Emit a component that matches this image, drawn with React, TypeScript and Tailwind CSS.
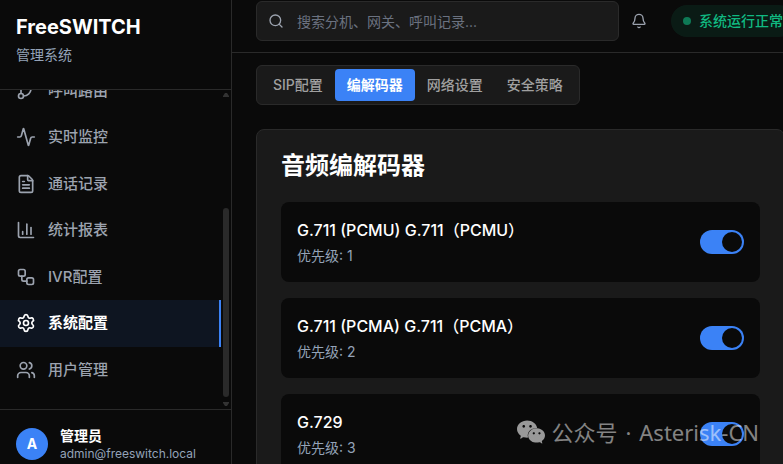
import { useState } from "react";
import {
  Activity,
  Bell,
  ChartColumn,
  FileText,
  GitBranch,
  Search,
  Settings,
  Users,
  Workflow,
} from "lucide-react";
import { SiWechat } from "react-icons/si";

const NAV_ITEMS = [
  { key: "routing", label: "呼叫路由", icon: GitBranch },
  { key: "monitor", label: "实时监控", icon: Activity },
  { key: "cdr", label: "通话记录", icon: FileText },
  { key: "reports", label: "统计报表", icon: ChartColumn },
  { key: "ivr", label: "IVR配置", icon: Workflow },
  { key: "settings", label: "系统配置", icon: Settings },
  { key: "users", label: "用户管理", icon: Users },
];

const TABS = ["SIP配置", "编解码器", "网络设置", "安全策略"];

const CODECS = [
  { id: "pcmu", name: "G.711 (PCMU) G.711（PCMU）", priority: 1 },
  { id: "pcma", name: "G.711 (PCMA) G.711（PCMA）", priority: 2 },
  { id: "g729", name: "G.729", priority: 3 },
];

function Sidebar() {
  return (
    <aside className="flex w-[232px] shrink-0 flex-col border-r border-[#2a2a2a]">
      <div className="shrink-0 border-b border-[#2a2a2a] px-4 pt-[13px] pb-6">
        <h1 className="text-xl font-bold">FreeSWITCH</h1>
        <p className="mt-1 text-sm text-[#94a3b8]">管理系统</p>
      </div>

      <div className="flex min-h-0 flex-1">
        <nav className="flex flex-1 flex-col justify-end overflow-hidden pb-4" aria-label="主导航">
          {NAV_ITEMS.map(({ key, label, icon: Icon }) => (
            <a
              key={key}
              href={`#${key}`}
              className={[
                "flex shrink-0 items-center gap-3 px-4 py-3 text-[15px] leading-normal",
                key === "settings"
                  ? "border-r-2 border-[#3b82f6] bg-[#3b82f6]/10 font-semibold text-white"
                  : "font-medium text-[#9ca3af]",
              ].join(" ")}
            >
              <Icon size={20} />
              {label}
            </a>
          ))}
        </nav>

        {/* Scrollbar */}
        <div className="flex w-[10px] shrink-0 flex-col items-center py-[3px]" aria-hidden="true">
          <svg width="6" height="4" viewBox="0 0 6 4" fill="#333333">
            <path d="M2 0H4L6 3V4H0V3z" />
          </svg>
          <div className="flex-[111]" />
          <div className="w-[6px] flex-[189] rounded-full bg-[#2a2a2a]" />
          <svg className="mt-[5px]" width="6" height="4" viewBox="0 0 6 4" fill="#333333">
            <path d="M0 0H6V1L4 4H2L0 1z" />
          </svg>
        </div>
      </div>

      <div className="flex shrink-0 items-center gap-3 border-t border-[#2a2a2a] px-4 pt-4 pb-0.5">
        <div className="flex size-8 items-center justify-center rounded-full bg-[#3b82f6] text-sm font-bold">
          A
        </div>
        <div>
          <p className="text-sm font-semibold">管理员</p>
          <p className="text-xs text-[#94a3b8]">admin@freeswitch.local</p>
        </div>
      </div>
    </aside>
  );
}

function TopBar() {
  return (
    <header className="flex shrink-0 items-center border-b border-[#2a2a2a] pt-px pr-3.5 pb-[11px] pl-6">
      <div className="relative flex-1">
        <Search size={16} className="absolute top-3 left-3 text-[#9ca3af]" />
        <input
          type="search"
          aria-label="搜索"
          placeholder="搜索分机、网关、呼叫记录..."
          className="h-10 w-full rounded-md border border-[#2a2a2a] bg-[#1a1a1a] pr-3 pl-10 text-sm outline-none placeholder:text-[#6b7280]"
        />
      </div>
      <button
        type="button"
        aria-label="通知"
        className="mr-3 flex size-10 items-center justify-center text-[#9ca3af]"
      >
        <Bell size={16} />
      </button>
      <div className="flex h-8 items-center gap-2 rounded-full bg-[#10b981]/10 px-3 text-sm font-medium whitespace-nowrap text-[#10b981]">
        <span className="size-2 rounded-full bg-[#10b981]/60" />
        系统运行正常
      </div>
    </header>
  );
}

function CodecRow({ id, name, priority }: { id: string; name: string; priority: number }) {
  const [enabled, setEnabled] = useState(true);

  return (
    <li className="flex items-center justify-between rounded-lg bg-[#0a0a0a] p-4">
      <label htmlFor={id}>
        <span className="block text-base font-medium">{name}</span>
        <span className="mt-1 block text-sm text-[#94a3b8]">优先级: {priority}</span>
      </label>
      <input
        id={id}
        type="checkbox"
        role="switch"
        checked={enabled}
        onChange={(e) => setEnabled(e.target.checked)}
        className="flex h-6 w-11 appearance-none rounded-full bg-[#2a2a2a] p-0.5 before:size-5 before:rounded-full before:bg-[#0a0a0a] checked:justify-end checked:bg-[#3b82f6]"
      />
    </li>
  );
}

export default function App() {
  const [tab, setTab] = useState("编解码器");

  return (
    <div className="relative flex h-screen overflow-hidden bg-[#0a0a0a] font-['Inter','Noto_Sans_CJK_SC',sans-serif] text-white">
      <Sidebar />

      <div className="flex min-w-[577px] flex-1 flex-col">
        <TopBar />

        <main className="flex min-h-0 flex-1 flex-col items-start gap-6 overflow-hidden px-6 pt-3">
          <div
            role="tablist"
            className="flex h-10 shrink-0 items-center rounded-md border border-[#2a2a2a] bg-[#1a1a1a] px-1"
          >
            {TABS.map((label) => (
              <button
                key={label}
                type="button"
                role="tab"
                aria-selected={tab === label}
                onClick={() => setTab(label)}
                className={[
                  "h-8 rounded-sm px-3 text-sm whitespace-nowrap",
                  tab === label ? "bg-[#3b82f6] font-semibold text-white" : "font-medium text-[#a0a0a0]",
                ].join(" ")}
              >
                {label}
              </button>
            ))}
          </div>

          <section className="w-full shrink-0 rounded-lg border border-[#2a2a2a] bg-[#1a1a1a] p-6">
            <h2 className="text-2xl leading-none font-semibold">音频编解码器</h2>
            <ul className="mt-6 flex flex-col gap-4">
              {CODECS.map((codec) => (
                <CodecRow key={codec.id} {...codec} />
              ))}
            </ul>
          </section>
        </main>
      </div>

      {/* Watermark */}
      <div className="pointer-events-none absolute right-6 bottom-[18px] flex items-center gap-1.5 text-[22px] leading-7 whitespace-nowrap text-white/50">
        <SiWechat size={28} className="text-[#999999]" />
        <p className="flex gap-2 font-['Noto_Sans','Noto_Sans_CJK_SC',sans-serif]">
          <span>公众号</span>
          <span>·</span>
          <span>Asterisk-CN</span>
        </p>
      </div>
    </div>
  );
}
